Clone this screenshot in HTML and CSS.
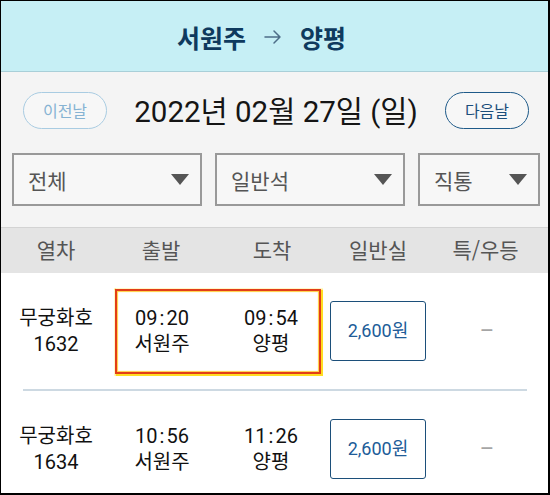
FILE: index.html
```html
<!DOCTYPE html>
<html lang="ko">
<head>
<meta charset="utf-8">
<title>서원주 → 양평</title>
<link rel="stylesheet" href="styles.css">
</head>
<body>
<div class="frame">
  <header class="topbar">
    <span class="station">서원주</span>
    <svg class="arrow" width="18" height="16" viewBox="0 0 18 16"><path d="M1 8H16M10 2L16 8L10 14" fill="none" stroke="#4d6d88" stroke-width="1.5" stroke-linecap="round" stroke-linejoin="round"/></svg>
    <span class="station">양평</span>
  </header>

  <section class="controls">
    <div class="date-row">
      <button class="pill pill-prev">이전날</button>
      <div class="date">2022년 02월 27일 (일)</div>
      <button class="pill pill-next">다음날</button>
    </div>
    <div class="filter-row">
      <div class="select select-wide"><span>전체</span><i class="caret"></i></div>
      <div class="select select-wide"><span>일반석</span><i class="caret"></i></div>
      <div class="select select-narrow"><span>직통</span><i class="caret"></i></div>
    </div>
  </section>

  <div class="thead">
    <div class="th c1">열차</div>
    <div class="th c2">출발</div>
    <div class="th c3">도착</div>
    <div class="th c4">일반실</div>
    <div class="th c5">특/우등</div>
  </div>

  <div class="row">
    <div class="train"><div>무궁화호</div><div>1632</div></div>
    <div class="times highlight">
      <div class="stop"><div>09<span class="colon">:</span>20</div><div>서원주</div></div>
      <div class="stop"><div>09<span class="colon">:</span>54</div><div>양평</div></div>
    </div>
    <div class="price">2,600원</div>
    <div class="dash">–</div>
  </div>
  <div class="divider"></div>
  <div class="row">
    <div class="train"><div>무궁화호</div><div>1634</div></div>
    <div class="times">
      <div class="stop"><div>10<span class="colon">:</span>56</div><div>서원주</div></div>
      <div class="stop"><div>11<span class="colon">:</span>26</div><div>양평</div></div>
    </div>
    <div class="price">2,600원</div>
    <div class="dash">–</div>
  </div>
</div>
</body>
</html>
```

FILE: styles.css
```css
* { box-sizing: border-box; }
html, body { margin: 0; padding: 0; background: #fff; }
body { font-family: Roboto, "Noto Sans CJK KR", sans-serif; color: #111; }

.frame {
  width: 550px;
  height: 495px;
  border-style: solid;
  border-color: #000;
  border-width: 1px 2px 2px 1px;
  overflow: hidden;
  background: #fff;
}

.topbar {
  height: 71px;
  background: #c6eff5;
  border-bottom: 1px solid #a9cfd8;
  display: flex;
  align-items: center;
  justify-content: center;
  gap: 18px;
  padding: 2px 26px 0 0;
}
.station {
  font-family: "Noto Sans CJK KR", sans-serif;
  font-weight: 700;
  font-size: 25px;
  color: #0e3a5e;
}
.arrow { display: block; }

.controls {
  background: #f4f4f4;
  padding: 18px 0 21px 0;
}
.date-row {
  display: flex;
  align-items: center;
  justify-content: space-between;
  padding: 0 19px 0 22px;
}
.pill {
  width: 84px;
  height: 37px;
  border-radius: 19px;
  background: #f7f7f7;
  font-family: "Noto Sans CJK KR", sans-serif;
  font-size: 16px;
  padding: 0;
}
.pill-prev { border: 1.5px solid #a9cce2; color: #86b3d3; }
.pill-next { border: 1.5px solid #1e5a89; color: #1b4e7b; }
.date {
  font-size: 29.5px;
  color: #151515;
  margin-top: -2px;
}

.filter-row {
  display: flex;
  gap: 13px;
  margin-top: 23px;
  padding-left: 11px;
}
.select {
  height: 53px;
  border: 2px solid #999;
  background: #f7f7f7;
  display: flex;
  align-items: center;
  justify-content: space-between;
  padding: 0 11px 0 14px;
  font-family: "Noto Sans CJK KR", sans-serif;
  font-size: 21px;
  color: #555;
}
.select-wide { width: 190px; }
.select-narrow { width: 122px; }
.caret {
  width: 0;
  height: 0;
  border-left: 9px solid transparent;
  border-right: 9px solid transparent;
  border-top: 11px solid #555;
}

.thead {
  display: flex;
  height: 46px;
  background: #e4e4e4;
  border-top: 1px solid #d3d3d3;
  align-items: center;
  font-family: "Noto Sans CJK KR", sans-serif;
  font-size: 21px;
  color: #555;
  padding-bottom: 3px;
}
.th { text-align: center; }
.c1 { width: 110px; }
.c2 { width: 100px; }
.c3 { width: 122px; }
.c4 { width: 90px; }
.c5 { flex: 1; }

.row {
  display: flex;
  align-items: center;
  height: 116px;
  font-family: Roboto, "Noto Sans CJK KR", sans-serif;
  font-size: 20px;
  line-height: 26px;
  color: #111;
}
.train {
  width: 110px;
  text-align: center;
}
.times {
  width: 206px;
  height: 85px;
  margin-left: 4px;
  display: flex;
  align-items: center;
  justify-content: space-between;
  padding: 0 19px 0 16px;
  border: 2px solid transparent;
}
.times.highlight {
  border-color: #e23d17;
  box-shadow: 0 0 1px 1.5px #ffdd22, inset 0 0 1px 1px #ffcf40;
}
.stop {
  min-width: 58px;
  text-align: center;
}
.colon { padding: 0 2px; }
.price {
  width: 96px;
  height: 60px;
  margin-left: 9px;
  border: 1.5px solid #1c4f7a;
  border-radius: 3px;
  display: flex;
  align-items: center;
  justify-content: center;
  font-size: 18px;
  color: #215c98;
}
.dash {
  flex: 1;
  text-align: center;
  color: #a5a5a5;
  font-size: 22px;
}
.divider {
  height: 2px;
  margin: 0 21px 0 22px;
  background: #cdd9e2;
}
```
